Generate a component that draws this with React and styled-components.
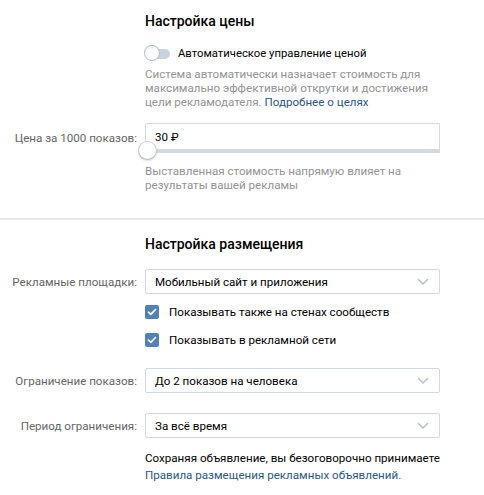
import React from 'react'
import styled, { createGlobalStyle } from 'styled-components'

const GlobalStyle = createGlobalStyle`
   body {
      margin: 0;
      background: #fff;
      font-family: Roboto, "Liberation Sans", Arial, sans-serif;
      font-size: 11.6px;
      color: #000;
   }
`

const Chevron = () => (
   <svg width="12" height="8" viewBox="0 0 12 8">
      <path d="M1.5 1.5 L6 6 L10.5 1.5" fill="none" stroke="#b8c1cc" strokeWidth="1.5" strokeLinecap="round" strokeLinejoin="round" />
   </svg>
)

const Check = () => (
   <svg width="10" height="8" viewBox="0 0 10 8">
      <path d="M1.5 4.2 L3.8 6.3 L8.5 1.5" fill="none" stroke="#fff" strokeWidth="1.7" strokeLinecap="round" strokeLinejoin="round" />
   </svg>
)

const Select = ({ value }) => (
   <SelectBox>
      <span>{value}</span>
      <Chevron />
   </SelectBox>
)

const CheckRow = ({ children }) => (
   <CheckLine>
      <CheckBox>
         <Check />
      </CheckBox>
      {children}
   </CheckLine>
)

const App = () => (
   <Page>
      <GlobalStyle />
      <Section>
         <Row>
            <span />
            <Title>Настройка цены</Title>
         </Row>
         <Row $top={15}>
            <span />
            <ToggleLine>
               <Toggle />
               Автоматическое управление ценой
            </ToggleLine>
         </Row>
         <Row $top={5}>
            <span />
            <Hint>
               Система автоматически назначает стоимость для максимально эффективной открутки и достижения цели
               рекламодателя. <Link>Подробнее о целях</Link>
            </Hint>
         </Row>
         <Row $top={14} $center>
            <Label>Цена за 1000 показов:</Label>
            <PriceField>
               <Input>30 ₽</Input>
               <Track>
                  <Thumb />
               </Track>
            </PriceField>
         </Row>
         <Row $top={11}>
            <span />
            <Hint>Выставленная стоимость напрямую влияет на результаты вашей рекламы</Hint>
         </Row>
      </Section>
      <Divider />
      <Section>
         <Row>
            <span />
            <Title>Настройка размещения</Title>
         </Row>
         <Row $top={15} $center>
            <Label>Рекламные площадки:</Label>
            <Select value="Мобильный сайт и приложения" />
         </Row>
         <Row $top={10}>
            <span />
            <CheckRow>Показывать также на стенах сообществ</CheckRow>
         </Row>
         <Row $top={12}>
            <span />
            <CheckRow>Показывать в рекламной сети</CheckRow>
         </Row>
         <Row $top={20} $center>
            <Label>Ограничение показов:</Label>
            <Select value="До 2 показов на человека" />
         </Row>
         <Row $top={20} $center>
            <Label>Период ограничения:</Label>
            <Select value="За всё время" />
         </Row>
         <Row $top={12}>
            <span />
            <Terms>
               Сохраняя объявление, вы безоговорочно принимаете
               <br />
               <Link>Правила размещения рекламных объявлений.</Link>
            </Terms>
         </Row>
      </Section>
   </Page>
)

export default App

const Page = styled.div`
   width: 484px;
   height: 495px;
   overflow: hidden;
   padding-top: 11px;
   box-sizing: border-box;
`

const Section = styled.div`
   display: flex;
   flex-direction: column;
`

const Row = styled.div`
   display: grid;
   grid-template-columns: 137px 295px;
   column-gap: 8px;
   align-items: ${p => (p.$center ? 'center' : 'start')};
   margin-top: ${p => p.$top || 0}px;
`

const Title = styled.div`
   font-size: 14px;
   font-weight: 500;
   line-height: 20px;
   color: #000;
`

const Label = styled.div`
   text-align: right;
   color: #656565;
   line-height: 16px;
   white-space: nowrap;
`

const ToggleLine = styled.div`
   display: flex;
   align-items: center;
   gap: 8px;
   font-size: 11.3px;
   line-height: 16px;
`

const Toggle = styled.div`
   position: relative;
   width: 25px;
   height: 10px;
   border-radius: 5px;
   background: #cad2db;
   &::before {
      content: '';
      position: absolute;
      left: 0;
      top: -3px;
      width: 14px;
      height: 14px;
      border-radius: 50%;
      background: #fff;
      box-shadow: 0 0 0 1px #b8c1cc;
      box-sizing: border-box;
   }
`

const Hint = styled.div`
   color: #939393;
   line-height: 14px;
`

const Link = styled.span`
   color: #2a5885;
`

const PriceField = styled.div`
   display: flex;
   flex-direction: column;
`

const Input = styled.div`
   height: 26px;
   box-sizing: border-box;
   border: 1px solid #d3d9de;
   border-bottom: none;
   border-radius: 2px 2px 0 0;
   padding: 0 9px;
   display: flex;
   align-items: center;
   line-height: 16px;
`

const Track = styled.div`
   position: relative;
   height: 4px;
   background: #d3d9de;
`

const Thumb = styled.div`
   position: absolute;
   left: -6px;
   top: -7px;
   width: 17px;
   height: 17px;
   border-radius: 50%;
   background: #fff;
   box-shadow: 0 1px 3px rgba(0, 0, 0, 0.3), 0 0 0 1px #dfe3e8;
`

const Divider = styled.div`
   height: 2px;
   background: #e7e8ec;
   margin: 26px 0 14px;
`

const SelectBox = styled.div`
   height: 25px;
   box-sizing: border-box;
   border: 1px solid #d3d9de;
   border-radius: 2px;
   padding: 0 9px;
   display: flex;
   align-items: center;
   justify-content: space-between;
   line-height: 16px;
   svg {
      margin-right: 1px;
   }
`

const CheckLine = styled.div`
   display: flex;
   align-items: center;
   gap: 10px;
   line-height: 16px;
`

const CheckBox = styled.div`
   width: 14px;
   height: 14px;
   border-radius: 2px;
   background: #5181b8;
   display: flex;
   align-items: center;
   justify-content: center;
`

const Terms = styled.div`
   line-height: 17px;
   color: #000;
`
